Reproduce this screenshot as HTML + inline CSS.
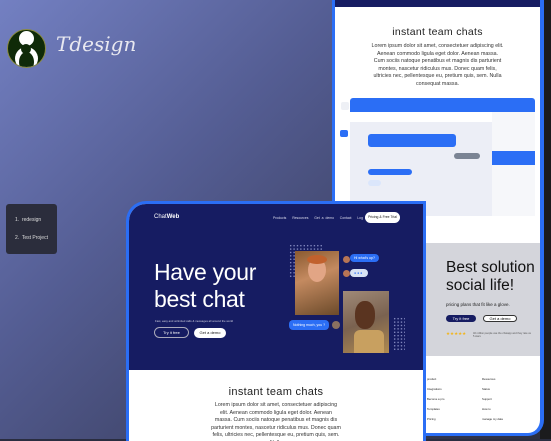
<!DOCTYPE html>
<html><head><style>
*{margin:0;padding:0;box-sizing:border-box}
body{width:551px;height:439px;overflow:hidden;position:relative;font-family:"Liberation Sans",sans-serif;background:#2a2d40}
.bg{position:absolute;left:0;top:0;width:551px;height:439px;background:linear-gradient(135deg,#7380c2 0%,#545d93 35%,#3f4468 65%,#2b2e40 100%)}
.dark{position:absolute;left:540px;top:0;width:11px;height:439px;background:#1b1b1d}
.back{position:absolute;left:332px;top:0;width:212px;height:436px;background:#fff;border-left:3px solid #2b6ef5;border-right:4px solid #2b6ef5;border-bottom:3px solid #2b6ef5;border-bottom-right-radius:16px;overflow:hidden}
.c{text-align:center}
.t{font-size:10.5px;color:#222;letter-spacing:.3px}
.p{font-size:5.3px;color:#333;line-height:7.5px}
.front{position:absolute;left:126px;top:201px;width:300px;height:240px;border:3px solid #2b6ef5;border-bottom:none;border-top-left-radius:20px;background:#fff;overflow:hidden}
.hero{height:166px;background:#161c62;position:relative;color:#fff}
.dots{position:absolute;background-image:radial-gradient(#8d93c8 0.6px,transparent 0.8px);background-size:3.4px 3.4px}
.bub{position:absolute;background:#2b6ef5;color:#fff;font-size:3.5px;border-radius:4px;padding:2px 4px}
.av{position:absolute;width:7px;height:7px;border-radius:50%;background:#b77555}
</style></head><body>
<div class="bg"></div>
<div class="dark"></div>
<div style="position:absolute;left:7px;top:29px;width:39px;height:39px;border-radius:50%;background:#0f2a08;border:1px solid #8a8a40;overflow:hidden">
 <div style="position:absolute;left:11px;top:1px;width:15px;height:15px;border-radius:50%;background:#fff"></div>
 <div style="position:absolute;left:7px;top:17px;width:23px;height:23px;border-radius:50%;background:#fff"></div>
 <div style="position:absolute;left:13px;top:14px;width:10px;height:10px;border-radius:50%;background:#0f2a08"></div>
 <div style="position:absolute;left:11px;top:22px;width:15px;height:20px;border-radius:50%;background:#0f2a08"></div>
</div>
<div style="position:absolute;left:56px;top:32px;font-family:'DejaVu Serif',serif;font-style:italic;font-size:20px;color:#e8e8f0">Tdesign</div>
<div style="position:absolute;left:6px;top:204px;width:51px;height:50px;background:#2b2d3c;border-radius:3px;color:#ddd;font-size:5px">
 <div style="position:absolute;left:9px;top:13px">1.&nbsp; redesign</div>
 <div style="position:absolute;left:9px;top:31px">2.&nbsp; Test Project</div>
</div>
<div class="back">
 <div style="height:7px;background:#161c62"></div>
 <div class="c t" style="margin-top:19px">instant team chats</div>
 <div class="c p" style="margin:5px 36px 0">Lorem ipsum dolor sit amet, consectetuer adipiscing elit. Aenean commodo ligula eget dolor. Aenean massa. Cum sociis natoque penatibus et magnis dis parturient montes, nascetur ridiculus mus. Donec quam felis, ultricies nec, pellentesque eu, pretium quis, sem. Nulla consequat massa.</div>
 <div style="position:absolute;left:3px;top:98px;width:12px;height:120px;background:#fff"></div>
 <div style="position:absolute;left:6px;top:102px;width:8px;height:8px;border-radius:2px;background:#eef0f5"></div>
 <div style="position:absolute;left:15px;top:98px;width:185px;height:14px;background:#2b6ef5;border-radius:3px 3px 0 0"></div>
 <div style="position:absolute;left:15px;top:112px;width:142px;height:104px;background:#eceef6"></div>
 <div style="position:absolute;left:15px;top:112px;width:142px;height:10px;background:#fff"></div>
 <div style="position:absolute;left:157px;top:112px;width:43px;height:104px;background:#f6f7fa"></div>
 <div style="position:absolute;left:157px;top:151px;width:43px;height:14px;background:#2b6ef5"></div>
 <div style="position:absolute;left:5px;top:130px;width:8px;height:7px;background:#2b6ef5;border-radius:2px"></div>
 <div style="position:absolute;left:33px;top:134px;width:88px;height:13px;background:#2b6ef5;border-radius:3px"></div>
 <div style="position:absolute;left:119px;top:153px;width:26px;height:6px;background:#7b8494;border-radius:3px"></div>
 <div style="position:absolute;left:33px;top:169px;width:44px;height:6px;background:#2b6ef5;border-radius:3px"></div>
 <div style="position:absolute;left:33px;top:180px;width:13px;height:6px;background:#dbe6fb;border-radius:3px"></div>
 <div style="position:absolute;left:0;top:243px;width:212px;height:113px;background:#d4d5db"></div>
 <div style="position:absolute;left:111px;top:259px;font-size:15.5px;color:#111;line-height:18px">Best solution<br>social life!</div>
 <div style="position:absolute;left:111px;top:302px;font-size:4.5px;color:#222">pricing plans that fit like a glove.</div>
 <div style="position:absolute;left:111px;top:315px;width:30px;height:7px;border-radius:4px;background:#161c62;color:#fff;font-size:4px;text-align:center;line-height:7px">Try it free</div>
 <div style="position:absolute;left:148px;top:315px;width:34px;height:7px;border-radius:4px;background:#fff;border:0.5px solid #333;font-size:4px;text-align:center;line-height:6px">Get a demo</div>
 <div style="position:absolute;left:111px;top:331px;font-size:4.5px;color:#f2b51c">★★★★★</div>
 <div style="position:absolute;left:138px;top:332px;font-size:2.6px;color:#555;width:60px">40 million people use the chatapp and they rate us 5 stars</div>
 <div style="position:absolute;left:92px;top:374px;font-size:2.8px;color:#222;line-height:10px">product<br>Integrations<br>Become a pro<br>Templates<br>Pricing</div>
 <div style="position:absolute;left:147px;top:374px;font-size:2.8px;color:#222;line-height:10px">Resources<br>Status<br>Support<br>How to<br>manage my data</div>
</div>
<div class="front">
 <div class="hero">
  <div style="position:absolute;left:25px;top:10px;font-size:6px">Chat<b>Web</b></div>
  <div style="position:absolute;left:144px;top:12px;font-size:3.4px;word-spacing:1px;color:#dde">Products &nbsp; Resources &nbsp; Get a demo &nbsp; Contact &nbsp; Log in</div>
  <div style="position:absolute;left:236px;top:8px;width:35px;height:11px;border-radius:6px;background:#fff;color:#111;font-size:3.4px;text-align:center;line-height:11px">Pricing &amp; Free Trial</div>
  <div style="position:absolute;left:25px;top:55px;font-size:23px;line-height:27px;letter-spacing:-.3px">Have your<br>best chat</div>
  <div style="position:absolute;left:26px;top:115px;font-size:2.8px;color:#ccd">Fast, easy and unlimited calls &amp; messages all around the world</div>
  <div style="position:absolute;left:25px;top:123px;width:35px;height:11px;border-radius:6px;border:0.6px solid #aab;font-size:4px;text-align:center;line-height:10px">Try it free</div>
  <div style="position:absolute;left:65px;top:124px;width:32px;height:10px;border-radius:6px;background:#fff;color:#111;font-size:4px;text-align:center;line-height:10px">Get a demo</div>
  <div class="dots" style="left:160px;top:40px;width:34px;height:34px"></div>
  <div class="dots" style="left:264px;top:113px;width:12px;height:34px"></div>
  <div style="position:absolute;left:166px;top:47px;width:44px;height:64px;background:linear-gradient(160deg,#8a5a30,#c48a60 40%,#6b4a2a)"></div>
  <div style="position:absolute;left:179px;top:54px;width:18px;height:24px;border-radius:50%;background:#e2a585"></div>
  <div style="position:absolute;left:178px;top:51px;width:20px;height:9px;border-radius:50%;background:#c1612d"></div>
  <div style="position:absolute;left:214px;top:87px;width:46px;height:62px;background:linear-gradient(160deg,#a08a78,#7a6250 50%,#b08a50)"></div>
  <div style="position:absolute;left:226px;top:97px;width:20px;height:28px;border-radius:45%;background:#5a3420"></div>
  <div style="position:absolute;left:225px;top:126px;width:30px;height:23px;background:#c8a060;border-radius:6px 6px 0 0"></div>
  <div class="av" style="left:214px;top:52px"></div>
  <div class="bub" style="left:221px;top:50px">Hi what's up?</div>
  <div class="av" style="left:214px;top:66px"></div>
  <div class="bub" style="left:221px;top:65px;background:#d8e3f3;color:#2b6ef5;width:18px;height:8px">● ● ●</div>
  <div class="bub" style="left:160px;top:116px;height:10px;line-height:6px">Nothing much, you ?</div>
  <div class="av" style="left:203px;top:117px;width:8px;height:8px;background:#8a7060"></div>
 </div>
 <div class="c t" style="margin-top:16px;font-size:11px">instant team chats</div>
 <div class="c p" style="margin:4px 82px 0">Lorem ipsum dolor sit amet, consectetuer adipiscing elit. Aenean commodo ligula eget dolor. Aenean massa. Cum sociis natoque penatibus et magnis dis parturient montes, nascetur ridiculus mus. Donec quam felis, ultricies nec, pellentesque eu, pretium quis, sem. Nulla</div>
</div>
</body></html>
